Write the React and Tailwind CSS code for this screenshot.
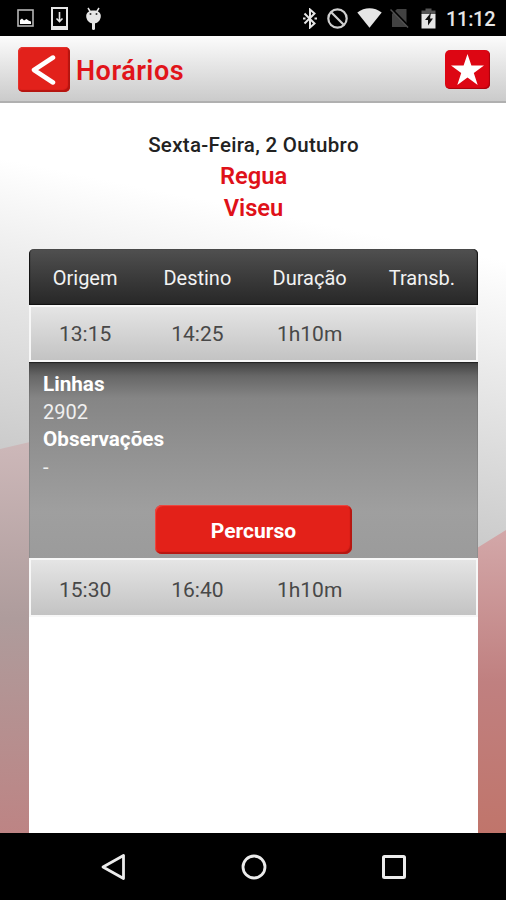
import clsx from 'clsx';

const columns = ['Origem', 'Destino', 'Duração', 'Transb.'];

const trips = [
  {
    origem: '13:15',
    destino: '14:25',
    duracao: '1h10m',
    transb: '',
    linhas: '2902',
    observacoes: '-',
    open: true,
  },
  { origem: '15:30', destino: '16:40', duracao: '1h10m', transb: '', open: false },
];

function StatusBar() {
  return (
    <div className="flex h-9 shrink-0 items-center justify-between bg-black pr-[10px] pl-[17px] text-[#e6e6e6]">
      <div className="flex items-center gap-[17px]">
        <svg width="17" height="18" viewBox="0 0 17 18" fill="none">
          <rect x="1" y="1" width="15" height="16" stroke="#b5b5b5" strokeWidth="1.6" />
          <path d="M3 15v-4l2-1.500 2 2 2.500-1.500 2 1.500 2.500 1v2.500z" fill="#fff" />
        </svg>
        <svg width="17" height="23" viewBox="0 0 17 23" fill="none">
          <rect x="1" y="1" width="15" height="21" stroke="currentColor" strokeWidth="2" />
          <path d="M1 20.500h15" stroke="currentColor" strokeWidth="3" />
          <path d="M8.500 5v9M5.500 11.500l3 3 3-3" stroke="currentColor" strokeWidth="1.600" />
        </svg>
        <svg width="17" height="23" viewBox="0 0 17 23" fill="none">
          <path d="M3 1l2.500 4M14 1l-2.500 4" stroke="currentColor" strokeWidth="1.500" />
          <path d="M1.200 9c0-3.500 3-5.500 7.300-5.500s7.300 2 7.300 5.500c0 4-3 7.500-7.300 7.500S1.200 13 1.200 9z" fill="currentColor" />
          <path d="M8.500 16v5.500" stroke="currentColor" strokeWidth="3" strokeLinecap="round" />
          <circle cx="5.500" cy="7" r="1" fill="#333" />
          <circle cx="11.500" cy="7" r="1" fill="#333" />
        </svg>
      </div>
      <div className="flex items-center">
        <svg className="mr-[10px]" width="14" height="21" viewBox="0 0 14 21" fill="none">
          <path d="M1.500 5.500L11.500 15.500 7 19.500V1.500l4.500 4L1.500 15.500" stroke="currentColor" strokeWidth="2" />
          <path d="M0 10.500h2.500M11.500 10.500h2.500" stroke="currentColor" strokeWidth="2" />
        </svg>
        <svg className="mr-[9px]" width="21" height="21" viewBox="0 0 21 21" fill="none" stroke="#cfcfcf" strokeWidth="2.200">
          <circle cx="10.500" cy="10.500" r="9.200" />
          <path d="M4 4l13 13" />
        </svg>
        <svg className="mr-[8px]" width="25" height="20" viewBox="0 0 25 20">
          <path d="M0.300 4.500C7.500-1.200 17.500-1.200 24.700 4.500L12.500 19.800z" fill="currentColor" />
        </svg>
        <svg className="mr-[12px]" width="19" height="20" viewBox="0 0 19 20">
          <path d="M7 1h9.500v18H2V6z" fill="#424242" />
          <path d="M1.500 0.500l17.500 18" stroke="#000" strokeWidth="1.800" />
          <path d="M0.500 1.500l17.500 18" stroke="#505050" strokeWidth="1.500" />
        </svg>
        <svg className="mr-[10px]" width="15" height="21" viewBox="0 0 15 21">
          <path d="M4.500 0.500h6v2H14.500v4H0.500v-4h4z" fill="#555" />
          <path d="M0.500 6h14v14.500H0.500z" fill="currentColor" />
          <path d="M10 4.500L4 12H7V17.500l5-7H9z" fill="#111" />
        </svg>
        <span className="mt-[2px] w-[50px] text-[20px] leading-none font-medium tracking-[-0.300px] whitespace-nowrap">
          11:12
        </span>
      </div>
    </div>
  );
}

function Header() {
  return (
    <header className="flex h-[67px] shrink-0 items-center border-b-2 border-[#b0b0b0] bg-linear-to-b from-[#fcfcfc] to-[#cbcbcb] pr-4 pl-[18px]">
      <button
        type="button"
        aria-label="Voltar"
        className="mt-[2px] flex h-[45px] w-[52px] items-center justify-center rounded-[5px] bg-[#e2211b] shadow-[inset_-2px_-2px_1px_#b51510,inset_1px_1px_1px_#e5352f]"
      >
        <svg width="26" height="30" viewBox="0 0 26 30" fill="none">
          <path d="M22 2.500L3 15l19 12.500" stroke="#fff" strokeWidth="4.500" strokeLinecap="round" strokeLinejoin="round" />
        </svg>
      </button>
      <h1 className="mt-1 ml-[6px] text-[27px] leading-8 font-semibold tracking-[0.500px] text-[#e1141a]">Horários</h1>
      <button
        type="button"
        aria-label="Favorito"
        className="mt-[2px] ml-auto flex h-[39px] w-[45px] items-center justify-center rounded-[5px] bg-[#dd0613] shadow-[inset_-1px_-1px_1px_#a8040d]"
      >
        <svg width="33" height="31" viewBox="0 0 33 31">
          <path d="M16.500 0L20.400 11.600H33L22.800 18.900 26.700 31 16.500 23.600 6.300 31 10.200 18.900 0 11.600H12.600z" fill="#fff" />
        </svg>
      </button>
    </header>
  );
}

function Backdrop() {
  return (
    <svg className="absolute inset-0" width="506" height="730" viewBox="0 0 506 730" aria-hidden="true">
      <defs>
        <linearGradient id="left" x1="0" y1="0" x2="0" y2="1">
          <stop offset="0" stopColor="#cdb8b9" />
          <stop offset="0.450" stopColor="#ae9c9c" />
          <stop offset="1" stopColor="#bd8484" />
        </linearGradient>
        <linearGradient id="right" x1="0" y1="0" x2="0" y2="1">
          <stop offset="0" stopColor="#d3a8a9" />
          <stop offset="0.500" stopColor="#c08080" />
          <stop offset="1" stopColor="#c0756b" />
        </linearGradient>
      </defs>
      <path d="M0 346L30 339V730H0z" fill="url(#left)" />
      <path d="M477 445L506 427V730H477z" fill="url(#right)" />
    </svg>
  );
}

function TripRow({ trip, last }) {
  return (
    <div
      className={clsx(
        'grid grid-cols-4 items-center bg-linear-to-b from-[#e6e6e6] to-[#c2c2c2] text-center text-[21px] text-[#484848] shadow-[inset_0_0_0_2px_#f7f7f7]',
        last ? 'h-[59px] pt-[7px]' : 'h-[57px] pt-[3px]',
      )}
    >
      <span>{trip.origem}</span>
      <span>{trip.destino}</span>
      <span>{trip.duracao}</span>
      <span>{trip.transb}</span>
    </div>
  );
}

function TripDetails({ trip }) {
  return (
    <div className="flex h-[196px] flex-col bg-[linear-gradient(to_bottom,#404040_0px,#676767_14px,#858585_36px,#929292_90px,#9f9f9f_150px,#9b9b9b_196px)] px-[14px] pt-[9px] text-[20px] leading-[27.700px] text-[#f0f0f0] shadow-[inset_0_1px_1px_#222]">
      <strong className="text-[20.700px] font-bold text-white">Linhas</strong>
      <span>{trip.linhas}</span>
      <strong className="text-[20.700px] font-bold text-white">Observações</strong>
      <span>{trip.observacoes}</span>
      <button
        type="button"
        className="mt-auto mb-1 h-[49px] w-[197px] self-center rounded-[7px] bg-[#e32119] pt-[4px] text-[21px] font-bold text-white shadow-[inset_-2px_-2px_1px_#b51711,inset_1px_1px_1px_#ee4b44]"
      >
        Percurso
      </button>
    </div>
  );
}

function NavBar() {
  return (
    <nav className="flex h-[67px] shrink-0 items-center justify-between bg-black px-[100px] text-[#ececec]">
      <svg width="26" height="28" viewBox="0 0 26 28" fill="none" stroke="currentColor" strokeWidth="2.800">
        <path d="M3 14L23.500 2.500v23z" strokeLinejoin="round" />
      </svg>
      <svg width="26" height="26" viewBox="0 0 26 26" fill="none" stroke="currentColor" strokeWidth="2.800">
        <circle cx="13" cy="13" r="11" />
      </svg>
      <svg width="24" height="24" viewBox="0 0 24 24" fill="none" stroke="currentColor" strokeWidth="3">
        <rect x="1.500" y="1.500" width="21" height="21" rx="1" />
      </svg>
    </nav>
  );
}

export default function App() {
  return (
    <div className="flex h-[900px] w-[506px] flex-col overflow-hidden bg-black font-['Roboto',sans-serif]">
      <StatusBar />
      <Header />
      <main className="relative flex flex-1 flex-col bg-[linear-gradient(191.500deg,#fff_0px,#fff_155px,#e9e9e9_270px,#cbcbcb_440px,#bababa_600px)]">
        <Backdrop />
        <div className="relative flex flex-1 flex-col pr-[28px] pl-[29px]">
          <section className="flex h-[146px] flex-col items-center pt-[27px] font-medium">
            <p className="text-[20.500px] leading-[30px] tracking-[0.300px] text-[#222]">Sexta-Feira, 2 Outubro</p>
            <p className="text-[23.700px] leading-8 font-semibold text-[#df1119]">Regua</p>
            <p className="text-[23.700px] leading-8 font-semibold text-[#df1119]">Viseu</p>
          </section>
          <section className="flex flex-1 flex-col bg-linear-to-b from-transparent from-[5px] to-white to-[5px]">
            <div className="grid h-14 grid-cols-4 items-center rounded-t-[5px] bg-linear-to-b from-[#505050] to-[#272727] pt-[2px] text-center text-[20px] text-[#f2f2f2] shadow-[inset_1px_-1px_1px_#111,inset_-1px_0_1px_#111]">
              {columns.map((column) => (
                <span key={column}>{column}</span>
              ))}
            </div>
            {trips.map((trip, index) => (
              <div key={trip.origem}>
                <TripRow trip={trip} last={index === trips.length - 1} />
                {trip.open && <TripDetails trip={trip} />}
              </div>
            ))}
          </section>
        </div>
      </main>
      <NavBar />
    </div>
  );
}
